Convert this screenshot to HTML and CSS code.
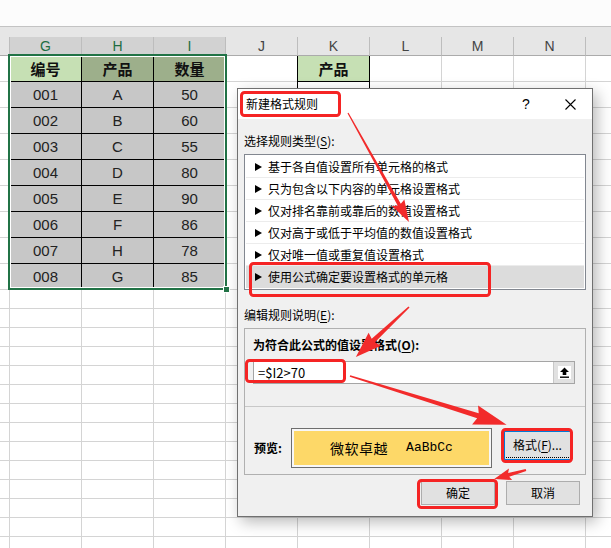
FILE: index.html
```html
<!DOCTYPE html>
<html lang="zh-CN">
<head>
<meta charset="utf-8">
<title>新建格式规则</title>
<link rel="stylesheet" href="styles.css">
</head>
<body>
<div class="app">
  <div class="top"></div>
  <div class="band"></div>
  <div class="colheads">
    <div class="ch ch-f"></div>
    <div class="ch sel">G</div>
    <div class="ch sel">H</div>
    <div class="ch sel">I</div>
    <div class="ch">J</div>
    <div class="ch">K</div>
    <div class="ch">L</div>
    <div class="ch">M</div>
    <div class="ch">N</div>
    <div class="ch ch-o"></div>
  </div>
  <div class="sheet">
    <div class="tall">
      <div class="tbl">
        <div class="cell hd hd-active">编号</div><div class="cell hd">产品</div><div class="cell hd">数量</div>
        <div class="cell">001</div><div class="cell">A</div><div class="cell">50</div>
        <div class="cell">002</div><div class="cell">B</div><div class="cell">60</div>
        <div class="cell">003</div><div class="cell">C</div><div class="cell">55</div>
        <div class="cell">004</div><div class="cell">D</div><div class="cell">80</div>
        <div class="cell">005</div><div class="cell">E</div><div class="cell">90</div>
        <div class="cell">006</div><div class="cell">F</div><div class="cell">86</div>
        <div class="cell">007</div><div class="cell">H</div><div class="cell">78</div>
        <div class="cell">008</div><div class="cell">G</div><div class="cell">85</div>
      </div>
      <div class="ktbl">
        <div class="kcell k-hd">产品</div>
        <div class="kcell"></div>
      </div>
      <div class="selection"><span class="handle"></span></div>
    </div>
    <div class="short"></div>
  </div>

  <div class="dialog">
    <div class="titlebar">
      <span class="title">新建格式规则</span>
      <span class="tb-btn help">?</span>
      <span class="tb-btn close">
        <svg width="11" height="11" viewBox="0 0 11 11"><path d="M0.5 0.5 L10.5 10.5 M10.5 0.5 L0.5 10.5" stroke="#000" stroke-width="1.1" fill="none"/></svg>
      </span>
    </div>
    <div class="dbody">
      <div class="label">选择规则类型(<u>S</u>):</div>
      <div class="listbox">
        <div class="item"><span class="tri"></span>基于各自值设置所有单元格的格式</div>
        <div class="item"><span class="tri"></span>只为包含以下内容的单元格设置格式</div>
        <div class="item"><span class="tri"></span>仅对排名靠前或靠后的数值设置格式</div>
        <div class="item"><span class="tri"></span>仅对高于或低于平均值的数值设置格式</div>
        <div class="item"><span class="tri"></span>仅对唯一值或重复值设置格式</div>
        <div class="item item-sel"><span class="tri"></span>使用公式确定要设置格式的单元格</div>
      </div>
      <div class="label label2">编辑规则说明(<u>E</u>):</div>
      <div class="group">
        <div class="group-top">
          <div class="blabel">为符合此公式的值设置格式(<u>O</u>):</div>
          <div class="input">
            <span class="formula">=$I2&gt;70</span>
            <span class="refbtn">
              <svg width="13" height="13" viewBox="0 0 13 13"><rect x="0" y="0" width="13" height="13" fill="#fff"/><path d="M6.5 1.5 L11 6 L8.3 6 L8.3 9 L4.7 9 L4.7 6 L2 6 Z" fill="#000"/><rect x="2" y="10.5" width="9" height="1.4" fill="#000"/></svg>
            </span>
          </div>
        </div>
        <div class="group-bottom">
          <span class="blabel plabel">预览:</span>
          <div class="preview"><div class="preview-fill"><span class="pv-cn">微软卓越</span><span class="pv-en">AaBbCc</span></div></div>
          <button class="btn fmtbtn"><span class="focus">格式(<u>F</u>)...</span></button>
        </div>
      </div>
      <div class="btnrow">
        <button class="btn okbtn">确定</button>
        <button class="btn">取消</button>
      </div>
    </div>
  </div>

  <svg class="marks" width="611" height="548" viewBox="0 0 611 548">
    <g fill="none" stroke="#f52424" stroke-width="3">
      <rect x="241.5" y="92.5" width="98" height="23" rx="3"/>
      <rect x="250.5" y="263.5" width="239" height="32" rx="3"/>
      <rect x="246.5" y="360.5" width="98" height="21" rx="3"/>
      <rect x="502.5" y="429.5" width="69" height="32" rx="3"/>
      <rect x="418.5" y="480.5" width="78" height="27" rx="3"/>
    </g>
    <g fill="#f22b2b">
      <polygon transform="translate(348 113) rotate(60.8)" points="0,-0.6 105,-1.8 103,-7 125,0 103,7 105,1.8 0,0.6"/>
      <polygon transform="translate(409 307) rotate(136.7)" points="0,-0.8 49,-2.4 47,-9 73,0 47,9 49,2.4 0,0.8"/>
      <polygon transform="translate(350 376) rotate(17.3)" points="0,-0.8 134,-2.6 131,-10 164,0 131,10 134,2.6 0,0.8"/>
      <polygon transform="translate(526 470) rotate(164.3)" points="0,-1 18,-2 16,-6 33,0 16,6 18,2 0,1"/>
    </g>
  </svg>
</div>
</body>
</html>
```
FILE: styles.css
```css
* { box-sizing: border-box; }
html, body { margin: 0; padding: 0; background: #fff; }
body { font-family: "Liberation Sans", "Noto Sans CJK SC", sans-serif; }

.app {
  position: relative;
  width: 611px;
  height: 548px;
  overflow: hidden;
  background: #fff;
}

.top { height: 27px; background: #fcfcfc; border-bottom: 1px solid #c3c3c3; }
.band { height: 10px; background: #e6e6e6; }

.colheads { display: flex; height: 19px; background: #e6e6e6; }
.ch {
  width: 72px;
  flex: none;
  height: 19px;
  border-right: 1px solid #bdbdbd;
  border-bottom: 1px solid #ababab;
  font-family: "Liberation Sans", sans-serif;
  font-size: 14px;
  line-height: 18px;
  color: #444;
  text-align: center;
}
.ch.sel { background: #d2d2d2; color: #1f6e43; }
.ch-f { width: 10px; }
.ch-o { flex: 1; border-right: 0; }

.sheet { display: flex; flex-direction: column; }

.tall {
  position: relative;
  display: grid;
  grid-template-columns: 10px repeat(8, 72px) 1fr;
  grid-template-rows: repeat(9, 26px);
  height: 234px;
  background:
    linear-gradient(to right, #d4d4d4 1px, transparent 1px) 9px 0 / 72px 100%,
    linear-gradient(to bottom, transparent 25px, #d4d4d4 25px) 0 0 / 100% 26px;
}
.short {
  height: 258px;
  background:
    linear-gradient(to right, #d4d4d4 1px, transparent 1px) 9px 0 / 72px 100%,
    linear-gradient(to bottom, transparent 18px, #d4d4d4 18px) 0 0 / 100% 19px;
}

.tbl {
  grid-column: 2 / 5;
  grid-row: 1 / 10;
  display: grid;
  grid-template-columns: repeat(3, 72px);
  grid-template-rows: repeat(9, 26px);
}
.cell {
  border-right: 1px solid #000;
  border-bottom: 1px solid #000;
  background: #c7c7c7;
  color: #222;
  font-size: 15px;
  line-height: 25px;
  text-align: center;
}
.hd {
  background: #9daf8b;
  font-family: "Noto Sans CJK SC", sans-serif;
  font-weight: 700;
  font-size: 15px;
  line-height: 25px;
  color: #111;
}
.hd-active { background: #c6e0b4; }

.ktbl {
  grid-column: 6;
  grid-row: 1 / 3;
  display: grid;
  grid-template-rows: 26px 26px;
}
.kcell {
  border-right: 1px solid #000;
  border-bottom: 1px solid #000;
  box-shadow: -1px 0 0 #000;
}
.k-hd {
  background: #c6e0b4;
  font-family: "Noto Sans CJK SC", sans-serif;
  font-weight: 700;
  font-size: 15px;
  line-height: 25px;
  text-align: center;
  color: #111;
}

.selection {
  position: absolute;
  left: 8px;
  top: -2px;
  width: 219px;
  height: 236px;
  border: 2px solid #217346;
  box-shadow: inset 0 0 0 1px #fff;
}
.handle {
  position: absolute;
  left: 213px;
  top: 230px;
  width: 7px;
  height: 7px;
  background: #217346;
  border: 1px solid #fff;
}

/* dialog */
.dialog {
  position: absolute;
  left: 237px;
  top: 88px;
  width: 356px;
  height: 429px;
  border: 1px solid #707070;
  background: #f0f0f0;
  box-shadow: 4px 5px 14px rgba(0, 0, 0, 0.28);
  font-family: "Noto Sans CJK SC", sans-serif;
  font-size: 12px;
  color: #000;
}
.titlebar {
  display: flex;
  align-items: center;
  height: 30px;
  background: #fff;
  padding-left: 8px;
}
.title { flex: 1; font-size: 12px; line-height: 16px; }
.tb-btn {
  width: 44px;
  height: 30px;
  display: flex;
  align-items: center;
  justify-content: center;
}
.help { font-family: "Liberation Sans", sans-serif; font-size: 14px; }

.dbody { padding: 0 6px; }
.label { margin-top: 14px; line-height: 16px; height: 16px; }
.label u, .blabel u, .btn u { text-decoration: underline; text-underline-offset: 2px; }
.label2 { margin-top: 17px; }

.listbox {
  margin-top: 5px;
  width: 342px;
  height: 136px;
  border: 1px solid #828790;
  background: #fff;
  padding: 1px 0;
}
.item {
  display: flex;
  align-items: center;
  height: 22px;
  margin: 0 1px;
  padding-left: 9px;
  border-bottom: 1px solid #ececec;
  line-height: 16px;
}
.item-sel { background: #dcdcdc; border-bottom: 0; }
.tri {
  width: 0;
  height: 0;
  border-left: 7px solid #000;
  border-top: 4px solid transparent;
  border-bottom: 4px solid transparent;
  margin-right: 6px;
}

.group {
  margin-top: 5px;
  width: 342px;
  height: 147px;
  border: 1px solid #b0b0b0;
}
.group-top {
  height: 78px;
  border-bottom: 1px solid #c8c8c8;
  padding: 8px 0 0 8px;
}
.blabel { font-weight: 700; line-height: 16px; }
.input {
  margin-top: 8px;
  width: 322px;
  height: 23px;
  border: 1px solid #a5a5a5;
  background: #fff;
  display: flex;
  align-items: center;
  justify-content: space-between;
}
.formula { padding-left: 4px; font-size: 13px; line-height: 18px; }
.refbtn {
  width: 21px;
  height: 21px;
  background: #e1e1e1;
  border-left: 1px solid #c8c8c8;
  display: flex;
  align-items: center;
  justify-content: center;
}
.refbtn svg { display: block; }

.group-bottom {
  display: flex;
  align-items: flex-start;
  padding: 21px 0 0 9px;
}
.plabel { margin-top: 12px; width: 37px; }
.preview {
  width: 201px;
  height: 40px;
  border: 1px solid #6e6e6e;
  background: #f7f7f7;
  padding: 2px;
}
.preview-fill {
  height: 100%;
  background: #fdd868;
  display: flex;
  align-items: center;
  justify-content: center;
  gap: 18px;
}
.pv-cn { font-size: 14px; line-height: 18px; letter-spacing: 0.5px; }
.pv-en { font-family: "Liberation Mono", monospace; font-size: 13px; line-height: 18px; }

.btn {
  font-family: "Noto Sans CJK SC", sans-serif;
  font-size: 12px;
  color: #000;
  background: #e1e1e1;
  border: 1px solid #adadad;
  padding: 0;
  margin: 0;
  height: 24px;
  width: 74px;
  line-height: 16px;
}
.fmtbtn {
  margin-left: 11px;
  margin-top: 2px;
  width: 69px;
  height: 31px;
  border: 1px solid #0078d7;
  box-shadow: inset 0 0 0 1px #0078d7;
  display: flex;
  align-items: center;
  justify-content: center;
}
.fmtbtn .focus {
  display: flex;
  align-items: center;
  justify-content: center;
  width: 63px;
  height: 25px;
  border-bottom: 1px dotted #000;
}

.btnrow {
  display: flex;
  justify-content: flex-end;
  gap: 11px;
  margin-top: 6px;
  padding-right: 6px;
}

.marks {
  position: absolute;
  left: 0;
  top: 0;
  pointer-events: none;
}
```
